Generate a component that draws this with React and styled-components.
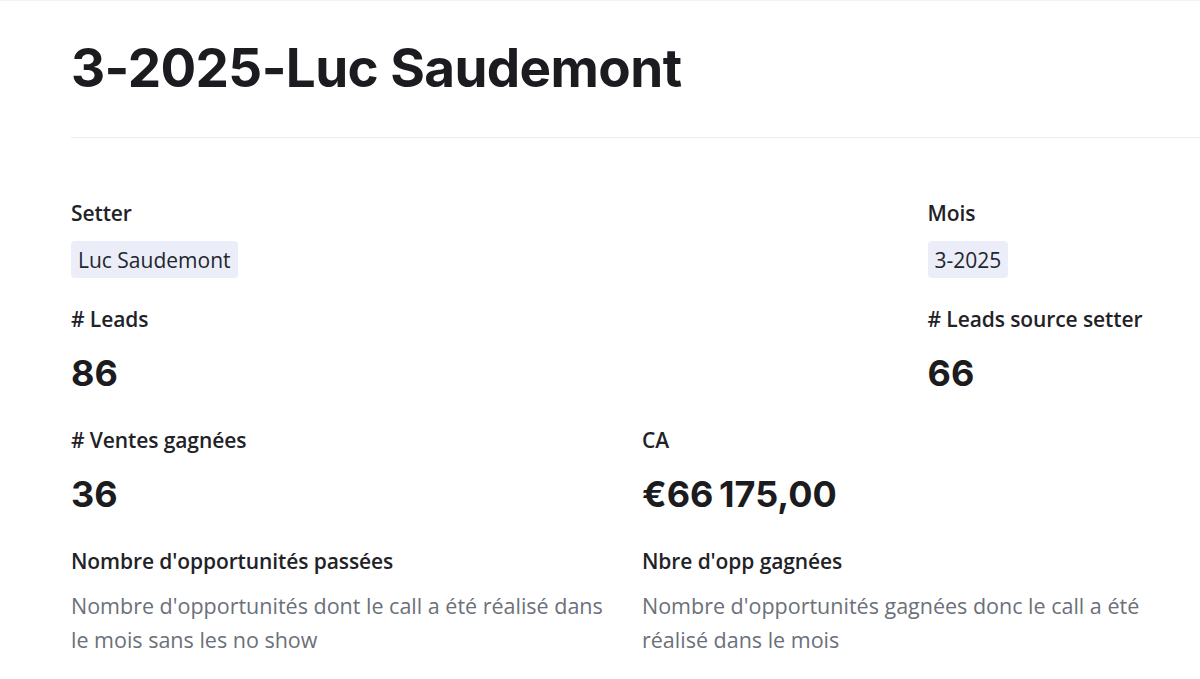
import styled, { createGlobalStyle } from 'styled-components'

const GlobalStyle = createGlobalStyle`
  html, body {
    margin: 0;
    padding: 0;
    background: #ffffff;
  }
  body {
    font-family: "Open Sans", "Noto Sans", sans-serif;
    color: #1f2328;
  }
`

const Page = styled.div`
  border-top: 1px solid #f1f2f4;
  padding-left: 71px;
  min-height: 100vh;
  box-sizing: border-box;
`

const Header = styled.header`
  padding-top: 35px;
  padding-bottom: 37px;
  border-bottom: 1px solid #ececef;
`

const Title = styled.h1`
  margin: 0;
  font-family: Inter, "Liberation Sans", sans-serif;
  font-weight: 700;
  font-size: 53px;
  line-height: 64px;
  letter-spacing: -0.6px;
  color: #1b1b20;
`

const Fields = styled.div`
  display: grid;
  grid-template-columns: repeat(4, 255.5px);
  column-gap: 30px;
  row-gap: 27px;
  padding-top: 61px;
`

const Field = styled.div`
  grid-column: ${p => p.$col} / span ${p => p.$span};
  display: flex;
  flex-direction: column;
  align-items: flex-start;
  gap: 14px;
`

const Label = styled.div`
  font-size: 21px;
  font-weight: 600;
  line-height: 28px;
  letter-spacing: -0.1px;
  color: #1f2328;
`

const Chip = styled.span`
  display: inline-flex;
  align-items: center;
  height: 37px;
  padding: 0 7px;
  border-radius: 4px;
  background: #ebeef8;
  font-size: 21px;
  color: #23262d;
`

const Value = styled.div`
  font-family: Inter, "Liberation Sans", sans-serif;
  font-weight: 700;
  font-size: 36px;
  line-height: 52px;
  color: #1b1b20;
`

const Description = styled.p`
  margin: 0;
  font-size: 21.5px;
  line-height: 34px;
  color: #6b7079;
`

const fields = [
  { label: 'Setter', chip: 'Luc Saudemont', col: 1, span: 3 },
  { label: 'Mois', chip: '3-2025', col: 4, span: 1 },
  { label: '# Leads', value: '86', col: 1, span: 3 },
  { label: '# Leads source setter', value: '66', col: 4, span: 1 },
  { label: '# Ventes gagnées', value: '36', col: 1, span: 2 },
  { label: 'CA', value: '€66\u202F175,00', col: 3, span: 2 },
  {
    label: "Nombre d'opportunités passées",
    desc: "Nombre d'opportunités dont le call a été réalisé dans le mois sans les no show",
    col: 1,
    span: 2,
  },
  {
    label: "Nbre d'opp gagnées",
    desc: "Nombre d'opportunités gagnées donc le call a été réalisé dans le mois",
    col: 3,
    span: 2,
  },
]

function App() {
  return (
    <>
      <GlobalStyle />
      <Page>
        <Header>
          <Title>3-2025-Luc Saudemont</Title>
        </Header>
        <Fields>
          {fields.map(f => (
            <Field key={f.label} $col={f.col} $span={f.span}>
              <Label>{f.label}</Label>
              {f.chip && <Chip>{f.chip}</Chip>}
              {f.value && <Value>{f.value}</Value>}
              {f.desc && <Description>{f.desc}</Description>}
            </Field>
          ))}
        </Fields>
      </Page>
    </>
  )
}

export default App
